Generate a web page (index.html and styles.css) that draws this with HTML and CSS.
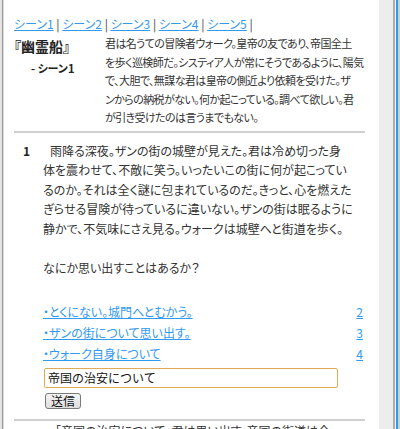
FILE: index.html
```html
<!DOCTYPE html>
<html lang="ja">
<head>
  <meta charset="UTF-8" />
  <meta name="viewport" content="width=device-width, initial-scale=1.0"/>
  <title>幽霊船 - シーン1</title>
  <link rel="stylesheet" href="styles.css">
</head>
<body>
  <div class="frame">
    <div class="edge"></div>

    <main class="page">
      <nav class="scenes">
        <a href="#s1">シーン1</a> | <a href="#s2">シーン2</a> | <a href="#s3">シーン3</a> | <a href="#s4">シーン4</a> | <a href="#s5">シーン5</a> |
      </nav>

      <header class="intro">
        <div class="title">
          <h1>『幽霊船』</h1>
          <p class="sub">- シーン1</p>
        </div>
        <p class="summary">君は名うての冒険者ウォーク。皇帝の友であり、帝国全土<br>を歩く巡検師だ。システィア人が常にそうであるように、陽気<br>で、大胆で、無謀な君は皇帝の側近より依頼を受けた。ザ<br>ンからの納税がない。何か起こっている。調べて欲しい。君<br>が引き受けたのは言うまでもない。</p>
      </header>

      <section class="turn">
        <div class="num">1</div>
        <div class="body">
          <p class="story">雨降る深夜。ザンの街の城壁が見えた。君は冷め切った身<br>体を震わせて、不敵に笑う。いったいこの街に何が起こってい<br>るのか。それは全く謎に包まれているのだ。きっと、心を燃えた<br>ぎらせる冒険が待っているに違いない。ザンの街は眠るように<br>静かで、不気味にさえ見る。ウォークは城壁へと街道を歩く。</p>
          <p class="ask">なにか思い出すことはあるか？</p>

          <ul class="choices">
            <li><a href="#s2">・とくにない。城門へとむかう。</a><a class="go" href="#s2">2</a></li>
            <li><a href="#s3">・ザンの街について思い出す。</a><a class="go" href="#s3">3</a></li>
            <li><a href="#s4">・ウォーク自身について</a><a class="go" href="#s4">4</a></li>
          </ul>

          <form class="answer" onsubmit="return false;">
            <input type="text" name="q" value="帝国の治安について" />
            <button type="submit">送信</button>
          </form>
        </div>
      </section>

      <section class="turn next">
        <div class="num"></div>
        <div class="body">
          <p class="story">「帝国の治安について」君は思い出す。帝国の街道は今</p>
        </div>
      </section>
    </main>

    <div class="scroll"></div>
    <div class="rim"></div>
  </div>
</body>
</html>
```

FILE: styles.css
```css
body {
  margin: 0;
  font-family: "Noto Sans CJK JP", "Liberation Sans", sans-serif;
  color: #333;
  background-color: #fff;
}

.frame {
  display: flex;
  height: 429px;
  overflow: hidden;
}

.edge {
  width: 4px;
  background: linear-gradient(to right, #e4e4e4 0 2px, #9a9a9a 2px 3px, #dcdcdc 3px);
}

.scroll {
  width: 14px;
  background-color: #ededed;
}

.rim {
  width: 7px;
  background: linear-gradient(to right, #adadad 0 2px, #f6f6f6 2px 3px, #2a9de4 3px 5px, #cfcfcf 5px);
}

.page {
  flex: 1;
  min-width: 0;
  padding: 16px 14px 0 10px;
  font-feature-settings: "palt";
}

a {
  color: #3399ee;
}

.scenes {
  font-size: 12px;
  line-height: 16px;
  color: #444;
}

/* タイトルとあらすじ */
.intro {
  display: grid;
  grid-template-columns: 91px 1fr;
  margin-top: 2px;
  padding-bottom: 4px;
}

.title h1 {
  margin: 3px 0 0;
  font-size: 14px;
  line-height: 18.5px;
  color: #222;
}

.title .sub {
  margin: 3px 0 0;
  padding-left: 17px;
  font-size: 11px;
  font-weight: bold;
  line-height: 18px;
  color: #222;
}

.summary {
  margin: 0;
  font-size: 11px;
  line-height: 18.5px;
  letter-spacing: -0.6px;
  white-space: nowrap;
}

/* シーンごとの本文 */
.turn {
  display: grid;
  grid-template-columns: 29px 1fr;
  border-top: 2px solid #d0d0d0;
  padding: 8px 0 10px;
}

.num {
  padding-left: 9px;
  font-size: 12px;
  font-weight: bold;
  line-height: 19.5px;
  color: #222;
}

.story, .ask {
  margin: 0;
  font-size: 12px;
  line-height: 19.5px;
  white-space: nowrap;
}

.story {
  text-indent: 7px;
}

.ask {
  margin-top: 19.5px;
}

.choices {
  list-style: none;
  margin: 23.5px 0 0;
  padding: 0;
  font-size: 12px;
  line-height: 21px;
}

.choices li {
  display: flex;
  justify-content: space-between;
  padding-right: 2px;
}

.answer {
  margin-top: 4px;
  display: flex;
  flex-direction: column;
  align-items: flex-start;
  gap: 5px;
}

.answer input {
  box-sizing: border-box;
  width: 294px;
  height: 20px;
  margin: 0 0 0 1px;
  padding: 0 3px;
  border: 1px solid #deaa55;
  border-radius: 2px;
  font-family: inherit;
  font-size: 12px;
  color: #111;
  outline: none;
}

.answer button {
  box-sizing: border-box;
  width: 36px;
  height: 16px;
  margin-left: 2px;
  padding: 0;
  border: 1px solid #7a7a7a;
  border-radius: 3px;
  background: linear-gradient(#f4f4f4, #dedede);
  font-family: inherit;
  font-size: 12px;
  line-height: 14px;
  color: #111;
}

.turn.next {
  padding-top: 0;
}

.turn.next .story {
  text-indent: 12px;
}
```
